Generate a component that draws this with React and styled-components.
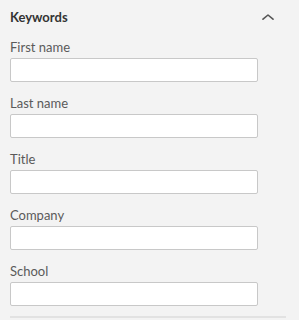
import styled, { createGlobalStyle } from 'styled-components';

const GlobalStyle = createGlobalStyle`
  html, body {
    margin: 0;
    padding: 0;
    background: #f3f3f3;
  }
  body {
    font-family: Lato, "Liberation Sans", sans-serif;
  }
`;

const fields = ['First name', 'Last name', 'Title', 'Company', 'School'];

const Panel = styled.section`
  width: 276px;
  margin-left: 10px;
  padding: 8px 0 10px;
  box-sizing: border-box;
  border-bottom: 2px solid #e2e2e2;
`;

const Header = styled.div`
  display: flex;
  align-items: center;
  justify-content: space-between;
  height: 18px;
  padding-right: 12px;
  margin-bottom: 12px;
`;

const Heading = styled.h3`
  margin: 0;
  font-size: 13px;
  font-weight: 700;
  line-height: 18px;
  color: #333;
`;

const Toggle = styled.button`
  display: flex;
  align-items: center;
  justify-content: center;
  padding: 0;
  border: 0;
  background: none;
  width: 12px;
  height: 14px;
  cursor: pointer;
`;

const Field = styled.label`
  display: flex;
  flex-direction: column;
  gap: 2px;
  & + & {
    margin-top: 12px;
  }
`;

const Label = styled.span`
  font-size: 13px;
  line-height: 18px;
  color: #5a5a5a;
`;

const Input = styled.input`
  box-sizing: border-box;
  width: 248px;
  height: 24px;
  border: 1px solid #c8c8c8;
  border-radius: 2px;
  background: #fff;
  font: inherit;
  font-size: 13px;
  padding: 0 6px;
  outline: none;
`;

export default function App() {
  return (
    <>
      <GlobalStyle />
      <Panel>
        <Header>
          <Heading>Keywords</Heading>
          <Toggle aria-label="Collapse">
            <svg width="12" height="6" viewBox="0 0 12 6" fill="none">
              <path d="M1 5.2 L6 1 L11 5.2" stroke="#555" strokeWidth="1.6" strokeLinecap="round" strokeLinejoin="round" />
            </svg>
          </Toggle>
        </Header>
        {fields.map((f) => (
          <Field key={f}>
            <Label>{f}</Label>
            <Input type="text" />
          </Field>
        ))}
      </Panel>
    </>
  );
}
